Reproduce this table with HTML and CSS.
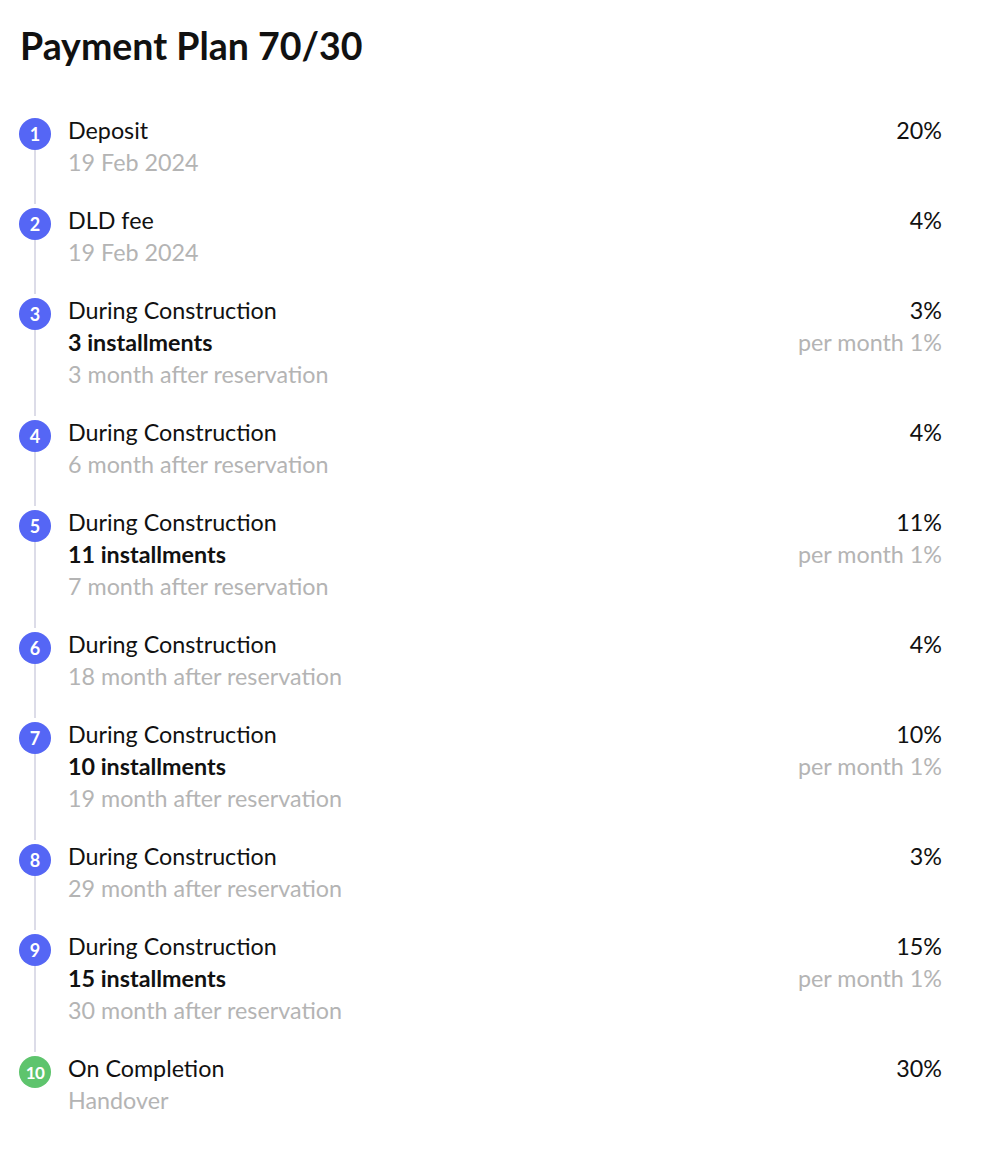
FILE: index.html
```html
<!DOCTYPE html>
<html>
<head>
<meta charset="utf-8">
<link rel="stylesheet" href="styles.css">
</head>
<body>
<div class="page">
  <h1 class="title">Payment Plan 70/30</h1>
  <ol class="plan">
    <li class="step">
      <div class="marker"><span class="dot">1</span><span class="line"></span></div>
      <div class="info"><div class="name">Deposit</div><div class="sub">19 Feb 2024</div></div>
      <div class="amount"><div class="pct">20%</div></div>
    </li>
    <li class="step">
      <div class="marker"><span class="dot">2</span><span class="line"></span></div>
      <div class="info"><div class="name">DLD fee</div><div class="sub">19 Feb 2024</div></div>
      <div class="amount"><div class="pct">4%</div></div>
    </li>
    <li class="step">
      <div class="marker"><span class="dot">3</span><span class="line"></span></div>
      <div class="info"><div class="name">During Construction</div><div class="inst">3 installments</div><div class="sub">3 month after reservation</div></div>
      <div class="amount"><div class="pct">3%</div><div class="sub">per month 1%</div></div>
    </li>
    <li class="step">
      <div class="marker"><span class="dot">4</span><span class="line"></span></div>
      <div class="info"><div class="name">During Construction</div><div class="sub">6 month after reservation</div></div>
      <div class="amount"><div class="pct">4%</div></div>
    </li>
    <li class="step">
      <div class="marker"><span class="dot">5</span><span class="line"></span></div>
      <div class="info"><div class="name">During Construction</div><div class="inst">11 installments</div><div class="sub">7 month after reservation</div></div>
      <div class="amount"><div class="pct">11%</div><div class="sub">per month 1%</div></div>
    </li>
    <li class="step">
      <div class="marker"><span class="dot">6</span><span class="line"></span></div>
      <div class="info"><div class="name">During Construction</div><div class="sub">18 month after reservation</div></div>
      <div class="amount"><div class="pct">4%</div></div>
    </li>
    <li class="step">
      <div class="marker"><span class="dot">7</span><span class="line"></span></div>
      <div class="info"><div class="name">During Construction</div><div class="inst">10 installments</div><div class="sub">19 month after reservation</div></div>
      <div class="amount"><div class="pct">10%</div><div class="sub">per month 1%</div></div>
    </li>
    <li class="step">
      <div class="marker"><span class="dot">8</span><span class="line"></span></div>
      <div class="info"><div class="name">During Construction</div><div class="sub">29 month after reservation</div></div>
      <div class="amount"><div class="pct">3%</div></div>
    </li>
    <li class="step">
      <div class="marker"><span class="dot">9</span><span class="line"></span></div>
      <div class="info"><div class="name">During Construction</div><div class="inst">15 installments</div><div class="sub">30 month after reservation</div></div>
      <div class="amount"><div class="pct">15%</div><div class="sub">per month 1%</div></div>
    </li>
    <li class="step last">
      <div class="marker"><span class="dot done">10</span></div>
      <div class="info"><div class="name">On Completion</div><div class="sub">Handover</div></div>
      <div class="amount"><div class="pct">30%</div></div>
    </li>
  </ol>
</div>
</body>
</html>
```
FILE: styles.css
```css
* { box-sizing: border-box; }
html, body { margin: 0; padding: 0; background: #fff; }
body { font-family: "Lato", "Noto Sans", sans-serif; color: #111; }
.page { padding: 26px 54px 0 19px; }
.title { margin: 0 0 48px 1px; font-size: 37.5px; line-height: 40px; font-weight: 700; color: #111; }
.plan { list-style: none; margin: 0; padding: 0; display: flex; flex-direction: column; }
.step { display: grid; grid-template-columns: 32px 1fr auto; column-gap: 17px; }
.marker { display: flex; flex-direction: column; align-items: center; padding-top: 4px; }
.dot { width: 32px; height: 32px; border-radius: 50%; background: #5566f5; color: #fff; font-size: 18px; font-weight: 700; display: flex; align-items: center; justify-content: center; flex: none; }
.dot.done { background: #5ec46d; font-size: 17px; letter-spacing: -0.5px; }
.line { flex: 1; width: 2px; background: #dcdce8; }
.info, .amount { font-size: 23.3px; line-height: 32px; padding-bottom: 26px; }
.amount { text-align: right; }
.name, .pct { color: #111; }
.inst { font-weight: 700; color: #111; }
.sub { color: #b4b4b4; }
```
